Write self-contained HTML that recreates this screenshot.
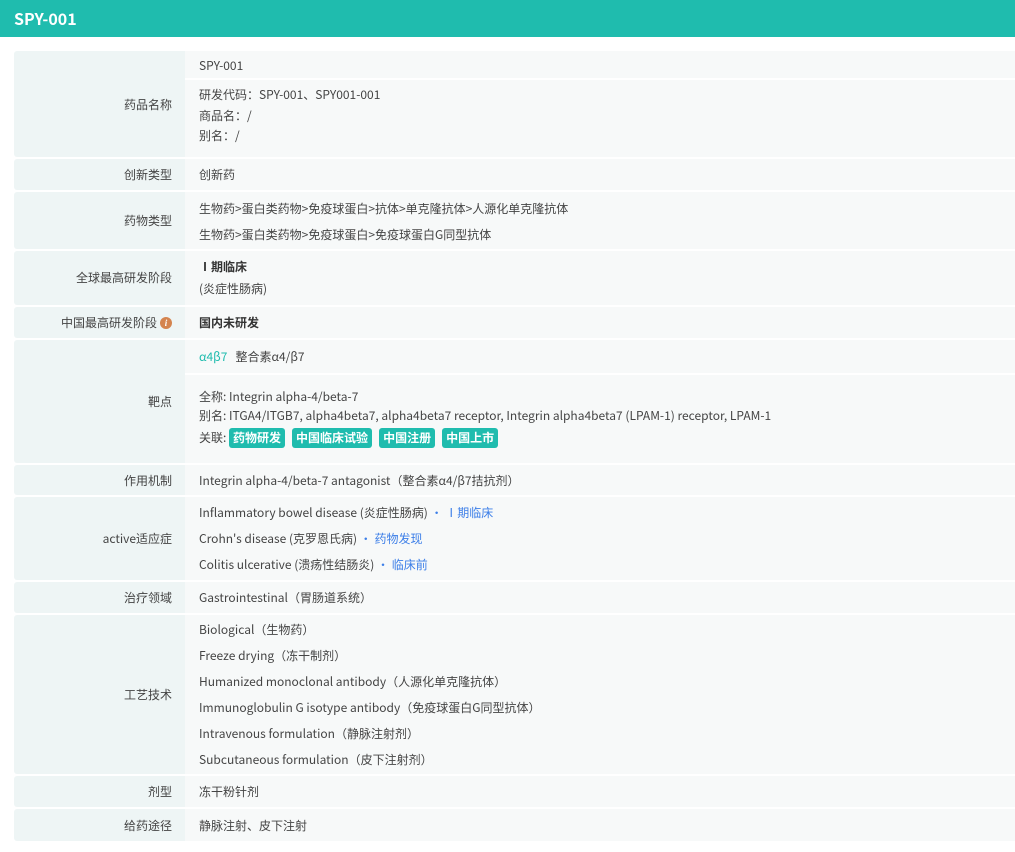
<!DOCTYPE html>
<html><head><meta charset="utf-8"><style>
*{margin:0;padding:0;box-sizing:border-box}
body{width:1015px;height:852px;background:#fff;font-family:"Noto Sans CJK SC","Liberation Sans",sans-serif;font-size:12px;color:#444;position:relative;overflow:hidden}
.hd{position:absolute;left:0;top:0;width:1015px;height:37px;background:#1fbcae;color:#fff;font-weight:bold;font-size:16px;line-height:37px;padding-left:14px}
.lb{position:absolute;left:14px;width:171px;background:#eef5f5;border-radius:3px 0 0 3px}
.vl{position:absolute;left:185px;width:830px;background:#f7f9f9}
.t{position:absolute;height:18px;line-height:18px;white-space:nowrap}
.l{text-align:right;padding-right:13px;width:171px;left:14px}
.v{left:199px}
.sep{position:absolute;left:185px;width:830px;height:2px;background:#fff}
.b{font-weight:bold;color:#333}
.tag{display:inline-block;background:#1fbcae;color:#fff;font-weight:bold;border-radius:3px;padding:0 4px;height:20px;line-height:20px;margin-right:7px}
.bl{color:#3d7fe8}
.tl{color:#1fbcae}
.i{display:inline-block;width:12px;height:12px;border-radius:50%;background:#d4844f;color:#fff;font-size:9px;line-height:12px;text-align:center;font-style:italic;font-weight:bold;vertical-align:1px;margin-left:3px;font-family:"Liberation Serif",serif}
</style></head><body>
<div class="hd">SPY-001</div>

<div class="lb" style="top:51px;height:106px"></div><div class="vl" style="top:51px;height:106px"></div><div class="sep" style="top:78px"></div>
<div class="lb" style="top:159px;height:31px"></div><div class="vl" style="top:159px;height:31px"></div>
<div class="lb" style="top:192px;height:57px"></div><div class="vl" style="top:192px;height:57px"></div>
<div class="lb" style="top:251px;height:54px"></div><div class="vl" style="top:251px;height:54px"></div>
<div class="lb" style="top:307px;height:31px"></div><div class="vl" style="top:307px;height:31px"></div>
<div class="lb" style="top:340px;height:123px"></div><div class="vl" style="top:340px;height:123px"></div><div class="sep" style="top:373px"></div>
<div class="lb" style="top:465px;height:30px"></div><div class="vl" style="top:465px;height:30px"></div>
<div class="lb" style="top:497px;height:83px"></div><div class="vl" style="top:497px;height:83px"></div>
<div class="lb" style="top:582px;height:31px"></div><div class="vl" style="top:582px;height:31px"></div>
<div class="lb" style="top:615px;height:159px"></div><div class="vl" style="top:615px;height:159px"></div>
<div class="lb" style="top:776px;height:31px"></div><div class="vl" style="top:776px;height:31px"></div>
<div class="lb" style="top:809px;height:32px"></div><div class="vl" style="top:809px;height:32px"></div>

<div class="t l" style="top:96px">药品名称</div>
<div class="t v" style="top:57px">SPY-001</div>
<div class="t v" style="top:86px">研发代码：SPY-001、SPY001-001</div>
<div class="t v" style="top:107px">商品名：/</div>
<div class="t v" style="top:127px">别名：/</div>

<div class="t l" style="top:166px">创新类型</div>
<div class="t v" style="top:166px">创新药</div>

<div class="t l" style="top:212px">药物类型</div>
<div class="t v" style="top:200px">生物药&gt;蛋白类药物&gt;免疫球蛋白&gt;抗体&gt;单克隆抗体&gt;人源化单克隆抗体</div>
<div class="t v" style="top:226px">生物药&gt;蛋白类药物&gt;免疫球蛋白&gt;免疫球蛋白G同型抗体</div>

<div class="t l" style="top:269px">全球最高研发阶段</div>
<div class="t v b" style="top:258px">Ⅰ期临床</div>
<div class="t v" style="top:280px">(炎症性肠病)</div>

<div class="t l" style="top:314px;padding-right:13px">中国最高研发阶段<span class="i">i</span></div>
<div class="t v b" style="top:314px">国内未研发</div>

<div class="t l" style="top:393px">靶点</div>
<div class="t v" style="top:348px"><span class="tl">α4β7</span>&nbsp;&nbsp; 整合素α4/β7</div>
<div class="t v" style="top:388px">全称:&nbsp;Integrin alpha-4/beta-7</div>
<div class="t v" style="top:407px">别名:&nbsp;ITGA4/ITGB7, alpha4beta7, alpha4beta7 receptor, Integrin alpha4beta7 (LPAM-1) receptor, LPAM-1</div>
<div class="t v" style="top:428px;height:20px;line-height:20px">关联:&nbsp;<span class="tag">药物研发</span><span class="tag">中国临床试验</span><span class="tag">中国注册</span><span class="tag">中国上市</span></div>

<div class="t l" style="top:472px">作用机制</div>
<div class="t v" style="top:472px">Integrin alpha-4/beta-7 antagonist（整合素α4/β7拮抗剂）</div>

<div class="t l" style="top:530px">active适应症</div>
<div class="t v" style="top:504px">Inflammatory bowel disease (炎症性肠病) <span class="bl">• Ⅰ期临床</span></div>
<div class="t v" style="top:530px">Crohn's disease (克罗恩氏病) <span class="bl">• 药物发现</span></div>
<div class="t v" style="top:556px">Colitis ulcerative (溃疡性结肠炎) <span class="bl">• 临床前</span></div>

<div class="t l" style="top:589px">治疗领域</div>
<div class="t v" style="top:589px">Gastrointestinal（胃肠道系统）</div>

<div class="t l" style="top:686px">工艺技术</div>
<div class="t v" style="top:621px">Biological（生物药）</div>
<div class="t v" style="top:647px">Freeze drying（冻干制剂）</div>
<div class="t v" style="top:673px">Humanized monoclonal antibody（人源化单克隆抗体）</div>
<div class="t v" style="top:699px">Immunoglobulin G isotype antibody（免疫球蛋白G同型抗体）</div>
<div class="t v" style="top:725px">Intravenous formulation（静脉注射剂）</div>
<div class="t v" style="top:751px">Subcutaneous formulation（皮下注射剂）</div>

<div class="t l" style="top:783px">剂型</div>
<div class="t v" style="top:783px">冻干粉针剂</div>

<div class="t l" style="top:817px">给药途径</div>
<div class="t v" style="top:817px">静脉注射、皮下注射</div>
</body></html>
